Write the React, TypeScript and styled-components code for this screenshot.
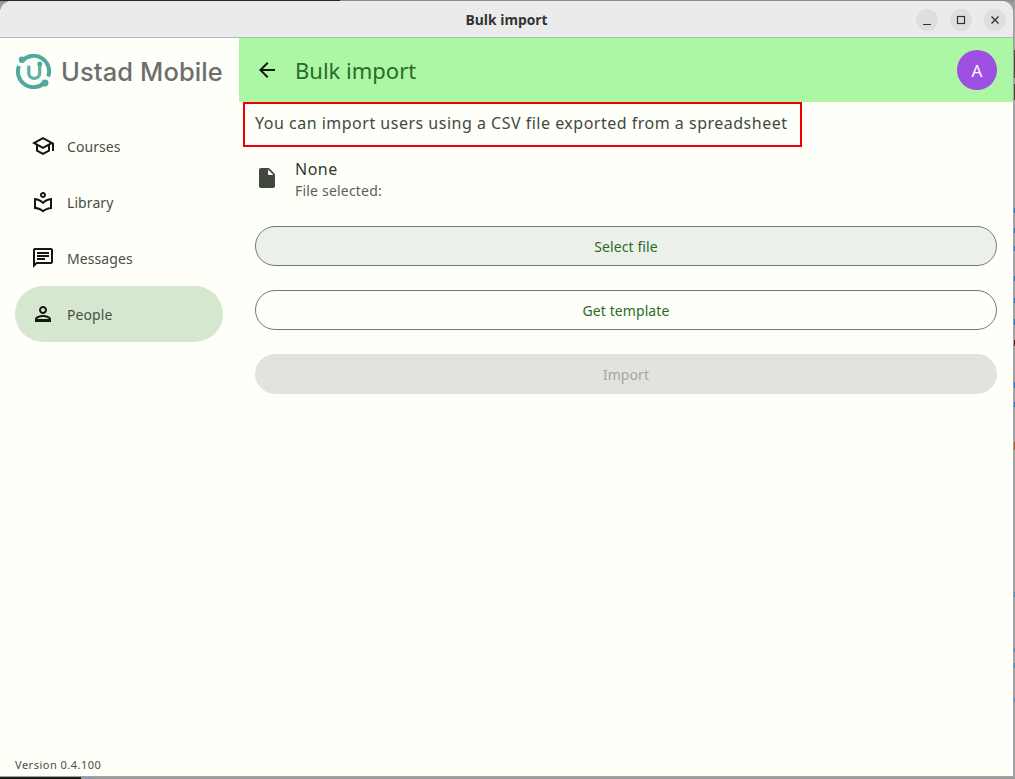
import styled, { createGlobalStyle } from "styled-components";

const GlobalStyle = createGlobalStyle`
  html, body {
    margin: 0;
    padding: 0;
    width: 100%;
    height: 100%;
    overflow: hidden;
    background: #9a9a9a;
  }
  * {
    box-sizing: border-box;
  }
`;

const navItems = [
  {
    label: "Courses",
    path: "M12 3 1 9l4 2.18v6L12 21l7-3.82v-6l2-1.09V17h2V9L12 3zm6.82 6L12 12.72 5.18 9 12 5.28 18.82 9zM17 15.99l-5 2.73-5-2.73v-3.72L12 15l5-2.73v3.72z",
  },
  {
    label: "Library",
    path: "M12 11.55C9.64 9.35 6.48 8 3 8v11c3.48 0 6.64 1.35 9 3.55 2.36-2.19 5.52-3.55 9-3.55V8c-3.48 0-6.64 1.35-9 3.55zm7 5.58c-2.53.34-4.93 1.3-7 2.82-2.06-1.52-4.47-2.49-7-2.83v-6.95c2.1.38 4.05 1.35 5.64 2.83L12 14.28l1.36-1.27c1.59-1.48 3.54-2.45 5.64-2.83v6.95zM12 8c1.66 0 3-1.34 3-3s-1.34-3-3-3-3 1.34-3 3 1.34 3 3 3zm0-4c.55 0 1 .45 1 1s-.45 1-1 1-1-.45-1-1 .45-1 1-1z",
  },
  {
    label: "Messages",
    path: "M20 2H4c-1.1 0-2 .9-2 2v18l4-4h14c1.1 0 2-.9 2-2V4c0-1.1-.9-2-2-2zm0 14H5.17L4 17.17V4h16v12zM6 12h8v2H6zm0-3h12v2H6zm0-3h12v2H6z",
  },
  {
    label: "People",
    path: "M12 6c1.1 0 2 .9 2 2s-.9 2-2 2-2-.9-2-2 .9-2 2-2m0 9c2.7 0 5.8 1.29 6 2H6c.23-.72 3.31-2 6-2m0-11C9.79 4 8 5.79 8 8s1.79 4 4 4 4-1.79 4-4-1.79-4-4-4zm0 9c-2.67 0-8 1.34-8 4v3h16v-3c0-2.66-5.33-4-8-4z",
    active: true,
  },
];

const Icon = ({ path, size = 24 }: { path: string; size?: number }) => (
  <svg width={size} height={size} viewBox="0 0 24 24" fill="currentColor">
    <path d={path} />
  </svg>
);

const LogoMark = () => (
  <svg width="35" height="35" viewBox="0 0 35 35" fill="none" stroke="#4fa99c">
    <path d="M6.5 6.5A15.5 15.5 0 0 1 32.2 22.5" strokeWidth="4" />
    <path d="M28.5 28.5A15.5 15.5 0 0 1 3 12" strokeWidth="4" />
    <path d="M12.8 13v5.9a5.45 5.45 0 0 0 10.9 0V11" strokeWidth="3.4" stroke="#62b3a7" strokeLinecap="round" />
    <circle cx="6" cy="5.8" r="3.2" fill="#4fa99c" stroke="none" />
    <circle cx="29" cy="29" r="3.4" fill="#4fa99c" stroke="none" />
    <circle cx="23.8" cy="10" r="2.5" fill="#4fa99c" stroke="none" />
  </svg>
);

export default function App() {
  return (
    <>
      <GlobalStyle />
      <Desktop>
        <WallpaperEdge />
        <Window>
          <TitleBar>
            <TitleText>Bulk import</TitleText>
            <WindowControls>
              <WindowButton>
                <svg width="12" height="12" viewBox="0 0 12 12" fill="none" stroke="#333" strokeWidth="1.2">
                  <path d="M2 10.5h8" />
                </svg>
              </WindowButton>
              <WindowButton>
                <svg width="12" height="12" viewBox="0 0 12 12" fill="none" stroke="#333" strokeWidth="1.2">
                  <rect x="2.5" y="2.5" width="7" height="7" />
                </svg>
              </WindowButton>
              <WindowButton>
                <svg width="12" height="12" viewBox="0 0 12 12" fill="none" stroke="#333" strokeWidth="1.4">
                  <path d="M2.5 2.5l7 7M9.5 2.5l-7 7" />
                </svg>
              </WindowButton>
            </WindowControls>
          </TitleBar>
          <Body>
            <Sidebar>
              <Logo>
                <LogoMark />
                <LogoText>Ustad Mobile</LogoText>
              </Logo>
              <Nav>
                {navItems.map(({ label, path, active }) => (
                  <NavItem key={label} $active={active}>
                    <Icon path={path} />
                    <NavLabel>{label}</NavLabel>
                  </NavItem>
                ))}
              </Nav>
              <Version>Version 0.4.100</Version>
            </Sidebar>
            <Main>
              <Header>
                <BackButton>
                  <Icon path="M20 11H7.83l5.59-5.59L12 4l-8 8 8 8 1.41-1.41L7.83 13H20v-2z" />
                </BackButton>
                <HeaderTitle>Bulk import</HeaderTitle>
                <Avatar>A</Avatar>
              </Header>
              <Content>
                <Description>You can import users using a CSV file exported from a spreadsheet</Description>
                <FileRow>
                  <FileIcon>
                    <Icon path="M6 2h7.17c.53 0 1.04.21 1.41.59l4.83 4.83c.38.37.59.88.59 1.41V20c0 1.1-.9 2-2 2H6c-1.1 0-2-.9-2-2V4c0-1.1.9-2 2-2zM13 3.5V8c0 .55.45 1 1 1h4.5z" />
                  </FileIcon>
                  <FileText>
                    <FileName>None</FileName>
                    <FileCaption>File selected:</FileCaption>
                  </FileText>
                </FileRow>
                <Actions>
                  <ActionButton $variant="tonal">Select file</ActionButton>
                  <ActionButton $variant="outlined">Get template</ActionButton>
                  <ActionButton $variant="disabled">Import</ActionButton>
                </Actions>
              </Content>
            </Main>
          </Body>
        </Window>
      </Desktop>
    </>
  );
}

const Desktop = styled.div`
  position: relative;
  width: 1015px;
  height: 779px;
  padding: 1px 1px 2px 0;
  background:
    linear-gradient(90deg, #1d1b19 0 81px, #8d99ad 81px 92px, transparent 92px) bottom / 100% 3px no-repeat,
    linear-gradient(90deg, #2a2826 0 340px, #8a8a86 340px) top / 100% 1px no-repeat,
    #9a9a9a;
`;

/* the sliver of desktop wallpaper that shows beside the window */
const WallpaperEdge = styled.div`
  position: absolute;
  top: 0;
  right: 0;
  width: 1px;
  height: 776px;
  background: linear-gradient(
    180deg,
    #a3a3a3 0 50px,
    #4a4232 50px 78px,
    #a3a3a3 78px 84px,
    #4a4232 84px 100px,
    #a3a3a3 100px 208px,
    #2f6fc0 208px 213px,
    #a3a3a3 213px 228px,
    #2f6fc0 228px 233px,
    #a3a3a3 233px 246px,
    #2f6fc0 246px 251px,
    #a3a3a3 251px 276px,
    #2f6fc0 276px 281px,
    #a3a3a3 281px 298px,
    #2f6fc0 298px 303px,
    #a3a3a3 303px 319px,
    #2f6fc0 319px 325px,
    #a3a3a3 325px 340px,
    #5a2418 340px 346px,
    #a3a3a3 346px 382px,
    #2f6fc0 382px 388px,
    #a3a3a3 388px 402px,
    #2f6fc0 402px 407px,
    #a3a3a3 407px 442px,
    #a05a30 442px 450px,
    #a3a3a3 450px 592px,
    #4a8ab0 592px 597px,
    #a3a3a3 597px 648px,
    #4a8ab0 648px 652px,
    #a3a3a3 652px 663px,
    #4a8ab0 663px 668px,
    #a3a3a3 668px 698px,
    #4a8ab0 698px 702px,
    #a3a3a3 702px 776px
  );
`;

const Window = styled.div`
  position: relative;
  width: 100%;
  height: 100%;
  display: flex;
  flex-direction: column;
  border-radius: 12px 12px 0 0;
  border-right: 1px solid #a3a3a3;
  border-bottom: 1px solid #a3a3a3;
  overflow: hidden;
  background: #fdfff8;
`;

const TitleBar = styled.div`
  position: relative;
  flex: 0 0 37px;
  display: flex;
  align-items: center;
  justify-content: center;
  background: #ebebeb;
  border-bottom: 1px solid #b8b8b6;
`;

const TitleText = styled.div`
  font: 700 13.8px "Open Sans", "Noto Sans", sans-serif;
  color: #333;
`;

const WindowControls = styled.div`
  position: absolute;
  top: 8px;
  right: 7px;
  display: flex;
  gap: 12px;
`;

const WindowButton = styled.div`
  width: 22px;
  height: 22px;
  display: flex;
  align-items: center;
  justify-content: center;
  border-radius: 50%;
  background: #dedede;
`;

const Body = styled.div`
  flex: 1;
  min-height: 0;
  display: flex;
`;

const Sidebar = styled.aside`
  flex: 0 0 239px;
  display: flex;
  flex-direction: column;
  padding: 0 16px 0 15px;
  font-family: "Noto Sans", sans-serif;
`;

const Logo = styled.div`
  height: 64px;
  display: flex;
  align-items: center;
  gap: 10px;
  padding: 2px 0 0 1px;
`;

const LogoText = styled.div`
  font: 500 25.5px "Inter", sans-serif;
  letter-spacing: 0.1px;
  color: #6e6e6e;
  white-space: nowrap;
`;

const Nav = styled.nav`
  margin-top: 16px;
  display: flex;
  flex-direction: column;
`;

const NavItem = styled.div<{ $active?: boolean }>`
  height: 56px;
  display: flex;
  align-items: center;
  gap: 12px;
  padding-left: 16px;
  border-radius: 28px;
  color: #14170f;
  background: ${({ $active }) => ($active ? "#d5e8cf" : "transparent")};
`;

const NavLabel = styled.span`
  font-size: 14px;
  letter-spacing: 0.08px;
  color: #4a4e46;
`;

const Version = styled.div`
  margin-top: auto;
  padding-bottom: 4px;
  font-size: 11px;
  letter-spacing: 0.5px;
  color: #4a4e46;
`;

const Main = styled.main`
  flex: 1;
  min-width: 0;
  display: flex;
  flex-direction: column;
  font-family: "Noto Sans", sans-serif;
`;

const Header = styled.header`
  flex: 0 0 64px;
  display: flex;
  align-items: center;
  padding: 0 16px;
  background: #abf7a3;
`;

const BackButton = styled.div`
  width: 24px;
  height: 24px;
  color: #14170f;
`;

const HeaderTitle = styled.div`
  flex: 1;
  margin-left: 16px;
  font-size: 22px;
  color: #2b6a2b;
`;

const Avatar = styled.div`
  width: 40px;
  height: 40px;
  display: flex;
  align-items: center;
  justify-content: center;
  border-radius: 50%;
  background: #9c4fe0;
  color: #fff;
  font-size: 17px;
`;

const Content = styled.div`
  flex: 1;
  display: flex;
  flex-direction: column;
`;

const Description = styled.div`
  align-self: flex-start;
  width: 559px;
  height: 45px;
  margin-left: 4px;
  padding: 0 0 4px 10px;
  display: flex;
  align-items: center;
  border: 2px solid #ee0000;
  font-size: 16px;
  letter-spacing: 0.5px;
  color: #43483f;
  white-space: nowrap;
`;

const FileRow = styled.div`
  display: flex;
  align-items: center;
  gap: 16px;
  padding: 10px 16px 0;
`;

const FileIcon = styled.div`
  width: 24px;
  height: 24px;
  margin-bottom: 2px;
  color: #43483f;
`;

const FileText = styled.div`
  display: flex;
  flex-direction: column;
`;

const FileName = styled.div`
  font-size: 16px;
  line-height: 24px;
  letter-spacing: 0.5px;
  color: #33372f;
`;

const FileCaption = styled.div`
  font-size: 14px;
  line-height: 20px;
  letter-spacing: 0.2px;
  color: #5c6057;
`;

const Actions = styled.div`
  margin-top: 25px;
  padding: 0 16px;
  display: flex;
  flex-direction: column;
  gap: 24px;
`;

const variants = {
  tonal: "background: #ebf1e9; border: 1px solid #74796f; color: #2b6a2b;",
  outlined: "background: transparent; border: 1px solid #74796f; color: #2b6a2b;",
  disabled: "background: #e2e3de; border: 1px solid #e2e3de; color: #a5a6a2;",
};

const ActionButton = styled.div<{ $variant: keyof typeof variants }>`
  height: 40px;
  display: flex;
  align-items: center;
  justify-content: center;
  border-radius: 20px;
  font-size: 14px;
  letter-spacing: 0.08px;
  ${({ $variant }) => variants[$variant]}
`;
